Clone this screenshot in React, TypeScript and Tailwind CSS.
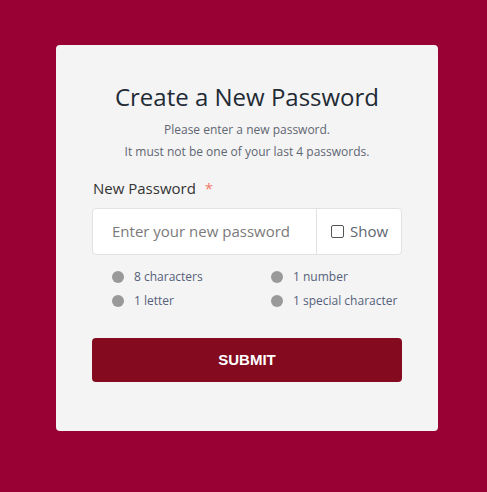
export default function App() {
  const reqs = ["8 characters", "1 number", "1 letter", "1 special character"];

  return (
    <div className="min-h-screen bg-[#990033] pt-[45px] pb-[61px] font-['Open_Sans',sans-serif]">
      <div className="ml-[56px] w-[382px] rounded-[4px] bg-[#f4f4f4] px-[36px] pt-[36px] pb-[49px]">
        <h1 className="text-center text-[24px] leading-[32px] text-[#222a35]">Create a New Password</h1>
        <p className="mt-[6px] text-center text-[12px] leading-[22px] text-[#5f6673]">
          Please enter a new password.
          <br />
          It must not be one of your last 4 passwords.
        </p>

        <label className="mt-[14px] block pl-[1px] text-[15px] leading-[22px] text-[#333]">
          New Password <span className="ml-[5px] text-[#f07a6a]">*</span>
        </label>

        <div className="mt-[9px] flex h-[47px] rounded-[4px] border border-[#e2e2e2] bg-white">
          <input
            type="password"
            placeholder="Enter your new password"
            className="min-w-0 flex-1 bg-transparent pl-[19px] text-[15px] text-[#333] outline-none placeholder:text-[#7a7a7a]"
          />
          <label className="flex w-[85px] items-center gap-[6px] border-l border-[#e2e2e2] pl-[14px] text-[15px] text-[#5e6570]">
            <span className="h-[13px] w-[13px] rounded-[2px] border border-[#555] bg-white" />
            Show
          </label>
        </div>

        <ul className="mt-[10px] grid grid-cols-[159px_1fr] pl-[20px]">
          {reqs.map((r) => (
            <li key={r} className="flex h-[24px] items-center gap-[10px] text-[12px] text-[#55617a]">
              <span className="h-[12px] w-[12px] rounded-full bg-[#999]" />
              {r}
            </li>
          ))}
        </ul>

        <button className="mt-[25px] h-[44px] w-full rounded-[4px] bg-[#840a20] font-['Liberation_Sans',sans-serif] text-[15px] font-bold text-white">
          SUBMIT
        </button>
      </div>
    </div>
  );
}
